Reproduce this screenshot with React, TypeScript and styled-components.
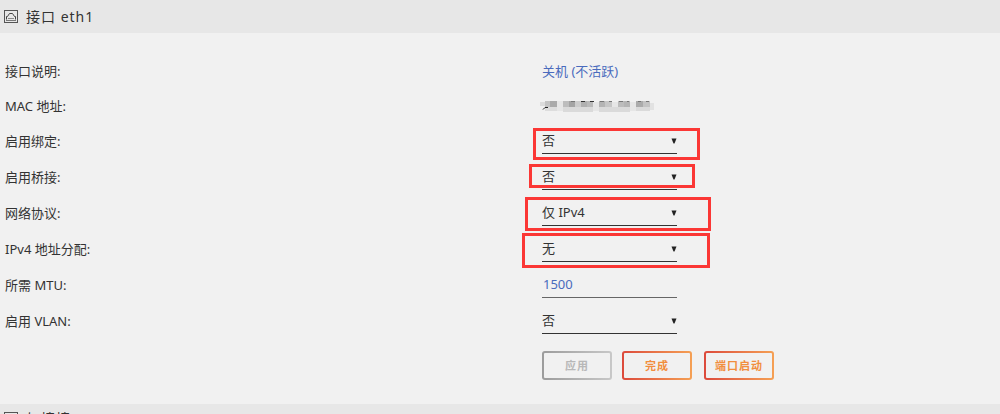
import React from "react";
import styled, { createGlobalStyle } from "styled-components";

const Global = createGlobalStyle`
  * { box-sizing: border-box; }
  html, body { margin: 0; background: #f1f1f1; }
  body, button, input, select {
    font-family: "Noto Sans", "Noto Sans CJK SC", sans-serif;
    font-size: 13px;
    color: #333;
  }
  body { overflow: hidden; }
`;

const SectionBar = styled.header<{ $compact?: boolean }>`
  display: flex;
  align-items: center;
  gap: 8px;
  height: ${(p) => (p.$compact ? 30 : 33)}px;
  padding: 0 4px;
  background: #e7e7e7;
`;

const SectionTitle = styled.h2`
  margin: 0;
  font-size: 14px;
  font-weight: 400;
  line-height: 20px;
  letter-spacing: 1px;
`;

const Form = styled.form`
  padding: 20px 5px 24px;
`;

const Row = styled.div<{ $control?: boolean }>`
  display: grid;
  grid-template-columns: 537fr 453fr;
  align-items: center;
  height: ${(p) => (p.$control ? 36 : 35)}px;
`;

const Label = styled.label`
  padding-bottom: 1px;
  line-height: 20px;
`;

const Caption = styled.span`
  line-height: 20px;
`;

const StatusLink = styled.a`
  color: #4a6bbd;
  text-decoration: none;
`;

const Field = styled.div`
  position: relative;
  width: 135px;
  height: 26px;
`;

const Select = styled.select`
  appearance: none;
  display: block;
  width: 100%;
  height: 26px;
  padding: 0 0 1px;
  border: 0;
  border-bottom: 1px solid #333;
  border-radius: 0;
  background: transparent;
  outline: 0;
`;

const Caret = styled.svg`
  position: absolute;
  right: 0;
  top: 10px;
  pointer-events: none;
`;

const TextInput = styled.input`
  display: block;
  width: 100%;
  height: 26px;
  padding: 0 1px 1px;
  border: 0;
  border-bottom: 1px solid #666;
  background: transparent;
  color: #4a6bbd;
  outline: 0;
`;

const Highlight = styled.span<{ $x: number; $y: number; $w: number; $h: number }>`
  position: absolute;
  left: ${(p) => p.$x}px;
  top: ${(p) => p.$y}px;
  width: ${(p) => p.$w}px;
  height: ${(p) => p.$h}px;
  border: 3px solid #fb3735;
  pointer-events: none;
`;

const Actions = styled.div`
  display: grid;
  grid-template-columns: 537fr 453fr;
  padding-top: 12px;
`;

const ButtonGroup = styled.div`
  grid-column: 2;
  display: flex;
  gap: 10px;
`;

const Button = styled.button<{ $spaced?: boolean }>`
  width: 70px;
  height: 29px;
  margin-left: ${(p) => (p.$spaced ? 2 : 0)}px;
  padding: 0 0 1px;
  border: 2px solid transparent;
  border-radius: 3px;
  background:
    linear-gradient(#f1f1f1, #f1f1f1) padding-box,
    linear-gradient(90deg, #dc4a3c, #f5a054) border-box;
  color: #f18e3e;
  font-size: 11px;
  font-weight: 700;
  letter-spacing: 1px;
  &:disabled {
    background:
      linear-gradient(#f1f1f1, #f1f1f1) padding-box,
      linear-gradient(90deg, #9c9c9c, #c8c8c8) border-box;
    color: #b8b8b8;
  }
`;

function PortIcon() {
  return (
    <svg width="14" height="14" viewBox="0 0 14 14" fill="none" stroke="#555" aria-hidden="true">
      <rect x="0.5" y="0.5" width="13" height="12" />
      <path d="M2.5 9.5V6.5H3.5L5.5 3.5H8.5L10.5 6.5H11.5V9.5" stroke="#444" />
      <path d="M4 8.5H10" stroke="#888" />
      <path d="M2 10.5H12" stroke="#777" />
    </svg>
  );
}

const mosaic = [
  [1, 3, 5, 4, "#dcdcdc"], [6, 2, 5, 6, "#c4c4c4"], [11, 2, 7, 6, "#aaaaaa"],
  [6, 8, 12, 4, "#dddddd"], [18, 2, 6, 10, "#e6e6e6"], [24, 2, 6, 6, "#bdbdbd"],
  [30, 2, 6, 6, "#a4a4a4"], [36, 2, 6, 6, "#cccccc"], [42, 2, 6, 6, "#b0b0b0"],
  [48, 2, 6, 6, "#bababa"], [24, 8, 30, 5, "#dadada"], [54, 3, 6, 9, "#e6e6e6"],
  [60, 2, 6, 6, "#b4b4b4"], [66, 2, 7, 6, "#c6c6c6"], [73, 3, 6, 9, "#e6e6e6"],
  [79, 2, 6, 6, "#bcbcbc"], [85, 2, 6, 6, "#b4b4b4"], [60, 8, 31, 5, "#dadada"],
  [91, 3, 6, 9, "#e6e6e6"], [97, 2, 7, 6, "#ababab"], [104, 2, 7, 6, "#c3c3c3"],
  [97, 8, 14, 4, "#dadada"], [111, 4, 4, 7, "#e2e2e2"],
] as const;

const MaskedValue = styled.svg`
  display: block;
  margin-left: -3px;
`;

function MaskedAddress() {
  return (
    <MaskedValue width="118" height="13" role="img" aria-label="MAC">
      {mosaic.map(([x, y, w, h, c], i) => (
        <rect key={i} x={x} y={y} width={w} height={h} fill={c} />
      ))}
      <path d="M4 10.5L6 8.5H9" stroke="#222" fill="none" />
      <path d="M42 2.5H46M51 2.5H55" stroke="#333" />
      <path d="M32 2.5H36M61 2.5H65M70 2.5H73M80 2.5H84M88 2.5H90M99 2.5H102M107 2.5H110" stroke="#777" />
    </MaskedValue>
  );
}

type Box = { x: number; y: number; w: number; h: number };

function SelectRow({ id, label, value, box }: { id: string; label: string; value: string; box?: Box }) {
  return (
    <Row $control>
      <Label htmlFor={id}>{label}</Label>
      <Field>
        <Select id={id} defaultValue={value}>
          <option>{value}</option>
        </Select>
        <Caret width="6" height="6" viewBox="0 0 6 6" aria-hidden="true">
          <path d="M0.5 0.5H5.5L3.5 5.5H2.5Z" fill="#222" />
        </Caret>
        {box && <Highlight $x={box.x} $y={box.y} $w={box.w} $h={box.h} />}
      </Field>
    </Row>
  );
}

export default function App() {
  return (
    <>
      <Global />
      <main>
        <SectionBar>
          <PortIcon />
          <SectionTitle>接口 eth1</SectionTitle>
        </SectionBar>
        <Form onSubmit={(e) => e.preventDefault()}>
          <Row>
            <Caption>接口说明:</Caption>
            <StatusLink href="#status">关机 (不活跃)</StatusLink>
          </Row>
          <Row>
            <Caption>MAC 地址:</Caption>
            <MaskedAddress />
          </Row>
          <SelectRow id="bond" label="启用绑定:" value="否" box={{ x: -9, y: 0, w: 167, h: 32 }} />
          <SelectRow id="bridge" label="启用桥接:" value="否" box={{ x: -13, y: 0, w: 166, h: 24 }} />
          <SelectRow id="protocol" label="网络协议:" value="仅 IPv4" box={{ x: -17, y: -3, w: 186, h: 34 }} />
          <SelectRow id="ipv4" label="IPv4 地址分配:" value="无" box={{ x: -20, y: -3, w: 188, h: 35 }} />
          <Row $control>
            <Label htmlFor="mtu">所需 MTU:</Label>
            <Field>
              <TextInput id="mtu" defaultValue="1500" />
            </Field>
          </Row>
          <SelectRow id="vlan" label="启用 VLAN:" value="否" />
          <Actions>
            <ButtonGroup>
              <Button type="button" disabled>应用</Button>
              <Button type="submit">完成</Button>
              <Button type="button" $spaced>端口启动</Button>
            </ButtonGroup>
          </Actions>
        </Form>
        <SectionBar $compact>
          <PortIcon />
          <SectionTitle>如接接</SectionTitle>
        </SectionBar>
      </main>
    </>
  );
}
